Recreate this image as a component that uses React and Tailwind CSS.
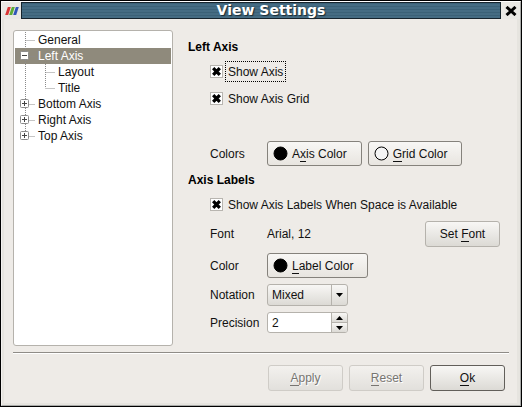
import { useState } from 'react';

const face = 'bg-linear-to-b from-[#f8f7f5] to-[#dcdad5]';

const tree = [
  { name: 'General', depth: 0, down: true },
  { name: 'Left Axis', depth: 0, box: 'minus', down: true },
  { name: 'Layout', depth: 1, down: true, outer: true },
  { name: 'Title', depth: 1, down: false, outer: true },
  { name: 'Bottom Axis', depth: 0, box: 'plus', down: true },
  { name: 'Right Axis', depth: 0, box: 'plus', down: true },
  { name: 'Top Axis', depth: 0, box: 'plus', down: false },
];

function Branch({ item }) {
  const width = item.depth ? 41 : 21;
  const x = item.depth ? 30.5 : 10.5;
  return (
    <svg width={width} height="16" className="shrink-0" aria-hidden="true">
      <g stroke="#8a8a8a" strokeDasharray="1 1" fill="none">
        {item.outer && <path d="M10.5 0V16" />}
        <path d={`M${x} 0V${item.down ? 16 : 8}`} />
        <path d={`M${x} 8.5H${x + 9}`} />
      </g>
      {item.box && (
        <g fill="#fff" stroke="#8c8c8c">
          <rect x="5.5" y="3.5" width="8" height="8" rx="1" />
          <path d="M7 7.5H12" stroke="#444" />
          {item.box === 'plus' && <path d="M9.5 5V10" stroke="#444" />}
        </g>
      )}
    </svg>
  );
}

function Check({ label, focused }) {
  const [on, setOn] = useState(true);
  return (
    <label className="flex items-center gap-[2px] pl-[22px]">
      <span className="grid size-[13px] shrink-0 place-items-center">
        <input
          type="checkbox"
          checked={on}
          onChange={() => setOn(!on)}
          className="col-start-1 row-start-1 size-[13px] appearance-none border border-[#b8b5b0] bg-white outline-none"
        />
        {on && (
          <svg width="9" height="9" viewBox="0 0 9 9" className="pointer-events-none col-start-1 row-start-1">
            <path d="M1.200 1.200L7.800 7.800M7.800 1.200L1.200 7.800" stroke="#000" strokeWidth="3.300" />
          </svg>
        )}
      </span>
      <span
        className={
          focused
            ? 'flex h-[21px] items-center border border-dotted border-black px-[2px]'
            : 'flex h-[21px] items-center border border-transparent px-[2px]'
        }
      >
        {label}
      </span>
    </label>
  );
}

function Mnemonic({ before = '', letter, after }) {
  return (
    <span>
      {before}
      <span className="border-b border-current">{letter}</span>
      {after}
    </span>
  );
}

function ColorButton({ fill, children }) {
  return (
    <button
      type="button"
      className="flex h-[25px] items-center gap-1 rounded-[3px] border border-[#85827c] bg-linear-to-b from-[#f8f7f5] to-[#e8e5e0] pr-[14px] pl-[5px]"
    >
      <svg width="15" height="15" viewBox="0 0 15 15" aria-hidden="true">
        <circle cx="7.5" cy="7.5" r="6.5" fill={fill} stroke="#000" />
      </svg>
      {children}
    </button>
  );
}

function Action({ children, disabled, strong }) {
  const tone = disabled
    ? 'border-[#cfccc7] from-[#f3f1ee] to-[#e2e0dc] text-[#777571] [text-shadow:1px_1px_0_#fff]'
    : strong
      ? 'border-[#625f5a] from-[#f8f7f5] to-[#dcdad5]'
      : 'border-[#b5b2ac] from-[#f8f7f5] to-[#dcdad5]';
  return (
    <button
      type="button"
      disabled={disabled}
      className={`flex h-[26px] w-[75px] items-center justify-center rounded-[3px] border bg-linear-to-b ${tone}`}
    >
      {children}
    </button>
  );
}

export default function App() {
  const [selected, setSelected] = useState('Left Axis');
  const [precision, setPrecision] = useState(2);

  return (
    <div className="flex min-h-screen flex-col border border-black bg-[#eeebe7] font-['Liberation_Sans',Arial,sans-serif] text-[12px] leading-4 text-[#111]">
      <div className="flex grow flex-col border border-t-white border-r-[#a9aaa8] border-b-[#a9aaa8] border-l-[#f4f2f0]">
        <header className="flex h-[17px] items-stretch bg-[#e9e8e4]">
          <div className="flex w-[19px] items-center justify-center">
            <svg width="14" height="10" viewBox="0 0 14 10" aria-hidden="true">
              <path d="M2.800 1H5.800L3.200 9H.2Z" fill="#d93535" />
              <path d="M6.800 1H9.800L7.200 9H4.200Z" fill="#5cab35" />
              <path d="M10.800 1H13.800L11.200 9H8.200Z" fill="#2f55b8" />
            </svg>
          </div>
          <h1 className="flex grow items-start justify-center border border-[#16242d] bg-[repeating-linear-gradient(to_bottom,#3b6177_0px,#3b6177_1px,#456c83_1px,#456c83_3px)] pl-5 font-['DejaVu_Sans',sans-serif] text-[14px] leading-[14px] font-bold text-white [text-shadow:1px_1px_1px_#1a2a33]">
            View Settings
          </h1>
          <button type="button" aria-label="Close" className="flex w-[19px] items-center justify-center">
            <svg width="12" height="10" viewBox="0 0 12 10" aria-hidden="true">
              <path d="M1.500 1L10.500 9M10.500 1L1.500 9" stroke="#000" strokeWidth="3" />
            </svg>
          </button>
        </header>

        <main className="flex grow flex-col border-r-[3px] border-b-2 border-l-2 border-[#e6e4df] pr-2 pl-[9px]">
          <div className="flex grow gap-[15px] pt-[11px]">
            <ul role="tree" className="w-[160px] shrink-0 rounded-[3px] border border-[#b5b2ac] bg-white p-px">
              {tree.map((item) => (
                <li
                  key={item.name}
                  role="treeitem"
                  aria-selected={selected === item.name}
                  onClick={() => setSelected(item.name)}
                  className={
                    selected === item.name
                      ? 'flex h-4 items-center bg-[#8f8a7c] text-white'
                      : 'flex h-4 items-center'
                  }
                >
                  <Branch item={item} />
                  <span className="pl-[2px]">{item.name}</span>
                </li>
              ))}
            </ul>

            <section className="flex min-w-0 grow flex-col pt-[9px] pr-[9px] pb-3">
              <h2 className="font-bold text-black">Left Axis</h2>
              <div className="flex flex-col gap-[6px] pt-[6px]">
                <Check label="Show Axis" focused />
                <Check label="Show Axis Grid" />
              </div>
              <div className="flex items-center pt-8">
                <span className="w-[79px] shrink-0 pl-[22px]">Colors</span>
                <div className="flex gap-[6px]">
                  <ColorButton fill="#000">
                    <Mnemonic before="A" letter="x" after="is Color" />
                  </ColorButton>
                  <ColorButton fill="#f4f4f4">
                    <Mnemonic letter="G" after="rid Color" />
                  </ColorButton>
                </div>
              </div>
              <h2 className="pt-[6px] font-bold text-black">Axis Labels</h2>
              <div className="pt-[6px]">
                <Check label="Show Axis Labels When Space is Available" />
              </div>
              <div className="flex flex-col gap-[6px] pt-[6px]">
                <div className="flex items-center">
                  <span className="w-[79px] shrink-0 pl-[22px]">Font</span>
                  <span className="grow">Arial, 12</span>
                  <Action>
                    <Mnemonic before="Set " letter="F" after="ont" />
                  </Action>
                </div>
                <div className="flex items-center">
                  <span className="w-[79px] shrink-0 pl-[22px]">Color</span>
                  <ColorButton fill="#000">
                    <Mnemonic letter="L" after="abel Color" />
                  </ColorButton>
                </div>
                <div className="flex items-center">
                  <label htmlFor="notation" className="w-[79px] shrink-0 pl-[22px]">Notation</label>
                  <div className={`grid h-[22px] w-[81px] rounded-[3px] border border-[#b5b2ac] ${face}`}>
                    <select
                      id="notation"
                      defaultValue="Mixed"
                      className="col-start-1 row-start-1 appearance-none bg-transparent pl-1 outline-none"
                    >
                      <option>Mixed</option>
                      <option>Scientific</option>
                      <option>Fixed</option>
                    </select>
                    <span className="pointer-events-none col-start-1 row-start-1 flex w-4 items-center justify-center justify-self-end border-l border-[#b5b2ac]">
                      <svg width="7" height="4" aria-hidden="true"><path d="M0 0H7L3.500 4Z" /></svg>
                    </span>
                  </div>
                </div>
                <div className="flex items-center">
                  <label htmlFor="precision" className="w-[79px] shrink-0 pl-[22px]">Precision</label>
                  <div className="flex h-[21px] w-[81px] overflow-hidden rounded-[3px] border border-[#b5b2ac] bg-white">
                    <input
                      id="precision"
                      value={precision}
                      onChange={(e) => setPrecision(Number(e.target.value) || 0)}
                      className="min-w-0 grow pl-1 outline-none"
                    />
                    <div className="flex w-4 shrink-0 flex-col divide-y divide-[#b5b2ac] border-l border-[#b5b2ac]">
                      <button
                        type="button"
                        aria-label="Increase"
                        onClick={() => setPrecision(precision + 1)}
                        className={`flex grow items-center justify-center ${face}`}
                      >
                        <svg width="7" height="4" aria-hidden="true"><path d="M0 4H7L3.500 0Z" /></svg>
                      </button>
                      <button
                        type="button"
                        aria-label="Decrease"
                        onClick={() => setPrecision(precision - 1)}
                        className={`flex grow items-center justify-center ${face}`}
                      >
                        <svg width="7" height="4" aria-hidden="true"><path d="M0 0H7L3.500 4Z" /></svg>
                      </button>
                    </div>
                  </div>
                </div>
              </div>
            </section>
          </div>

          <hr className="mt-[6px] h-[2px] border-t border-b border-t-[#8f8c87] border-b-white" />

          <footer className="flex justify-end gap-[6px] pt-[11px] pr-1 pb-3">
            <Action disabled>
              <Mnemonic letter="A" after="pply" />
            </Action>
            <Action disabled>
              <Mnemonic letter="R" after="eset" />
            </Action>
            <Action strong>
              <Mnemonic letter="O" after="k" />
            </Action>
          </footer>
        </main>
      </div>
    </div>
  );
}
